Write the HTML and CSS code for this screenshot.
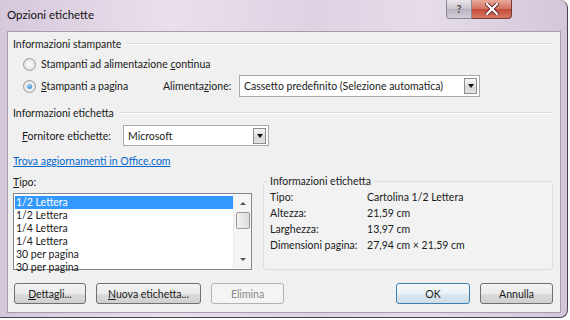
FILE: index.html
```html
<!DOCTYPE html>
<html lang="it">
<head>
  <meta charset="UTF-8">
  <title>Opzioni etichette</title>
  <link rel="stylesheet" href="styles.css">
</head>
<body>
  <div class="window">
    <div class="titlebar">
      <span class="title">Opzioni etichette</span>
      <div class="caption-buttons">
        <span class="cap-help">?</span>
        <span class="cap-close">
          <svg width="14" height="12" viewBox="0 0 14 12">
            <path d="M2 1 L12 11 M12 1 L2 11" stroke="#5a2020" stroke-width="4" stroke-linecap="square"/>
            <path d="M2 1 L12 11 M12 1 L2 11" stroke="#ffffff" stroke-width="2.2" stroke-linecap="square"/>
          </svg>
        </span>
      </div>
    </div>

    <div class="client">
      <div class="group-head"><span>Informazioni stampante</span></div>

      <div class="radio-row first">
        <span class="radio"></span>
        <span>Stampanti ad alimentazione <u>c</u>ontinua</span>
      </div>
      <div class="radio-row second">
        <span class="radio checked"></span>
        <span class="page-label"><u>S</u>tampanti a pagina</span>
        <span class="feed-label">Alimenta<u>z</u>ione:</span>
        <div class="combo feed-combo">
          <span class="combo-text">Cassetto predefinito (Selezione automatica)</span>
          <span class="combo-btn"></span>
        </div>
      </div>

      <div class="group-head second-head"><span>Informazioni etichetta</span></div>

      <div class="vendor-row">
        <span class="vendor-label"><u>F</u>ornitore etichette:</span>
        <div class="combo vendor-combo">
          <span class="combo-text">Microsoft</span>
          <span class="combo-btn"></span>
        </div>
      </div>

      <a class="link" href="#">Trova aggiornamenti in Office.com</a>

      <div class="lower">
        <div class="type-col">
          <div class="type-label"><u>T</u>ipo:</div>
          <div class="listbox">
            <ul class="items">
              <li class="selected">1/2 Lettera</li>
              <li>1/2 Lettera</li>
              <li>1/4 Lettera</li>
              <li>1/4 Lettera</li>
              <li>30 per pagina</li>
              <li>30 per pagina</li>
            </ul>
            <div class="scrollbar">
              <span class="arrow up"></span>
              <span class="thumb"></span>
              <span class="arrow down"></span>
            </div>
          </div>
        </div>

        <fieldset class="info">
          <legend>Informazioni etichetta</legend>
          <div class="info-grid">
            <span>Tipo:</span><span>Cartolina 1/2 Lettera</span>
            <span>Altezza:</span><span>21,59 cm</span>
            <span>Larghezza:</span><span>13,97 cm</span>
            <span>Dimensioni pagina:</span><span>27,94 cm × 21,59 cm</span>
          </div>
        </fieldset>
      </div>

      <div class="buttons">
        <button class="btn btn-details"><u>D</u>ettagli...</button>
        <button class="btn btn-new"><u>N</u>uova etichetta...</button>
        <button class="btn btn-delete" disabled>Elimina</button>
        <span class="spacer"></span>
        <button class="btn btn-ok">OK</button>
        <button class="btn btn-cancel">Annulla</button>
      </div>
    </div>
  </div>
</body>
</html>
```

FILE: styles.css
```css
html, body {
  margin: 0;
  padding: 0;
}
body {
  width: 570px;
  height: 320px;
  overflow: hidden;
  background: #ffffff;
  font-family: Lato, "Noto Sans", sans-serif;
  font-size: 10.5px;
  color: #1a1a1a;
  white-space: nowrap;
}
.window {
  width: 568px;
  height: 318px;
  box-sizing: border-box;
  padding: 0 6px 5px 7px;
  border: 1px solid #4a4250;
  border-top: none;
  border-left: none;
  border-radius: 0 8px 8px 0;
  background: linear-gradient(90deg, #d6c8dc 0%, #e9e0ec 30%, #ded2e3 55%, #e6dce9 75%, #d4c6da 100%);
}
.titlebar {
  height: 31px;
  display: flex;
  align-items: flex-start;
  position: relative;
}
.title {
  font-size: 11.5px;
  color: #111;
  margin-top: 8px;
}
.caption-buttons {
  position: absolute;
  top: 0;
  right: 49px;
  display: flex;
}
.cap-help {
  width: 26px;
  height: 19px;
  box-sizing: border-box;
  border: 1px solid #8e8796;
  border-top: none;
  border-radius: 0 0 0 4px;
  background: linear-gradient(#e9e6ec, #c9c3cd 50%, #b9b2be 51%, #d3ced6);
  color: #4a4a4a;
  font-size: 11px;
  font-weight: bold;
  text-align: center;
  line-height: 17px;
}
.cap-close {
  width: 40px;
  height: 19px;
  box-sizing: border-box;
  border: 1px solid #7a3a36;
  border-top: none;
  border-left: none;
  border-radius: 0 0 4px 0;
  background: linear-gradient(#e9a99c, #d4705f 50%, #c24a37 51%, #d77a64);
  display: flex;
  align-items: center;
  justify-content: center;
}
.client {
  height: 282px;
  box-sizing: border-box;
  border: 1px solid #a89cab;
  background: #f0f0f0;
  padding: 4px 7px 0 5px;
}
.group-head {
  display: flex;
  align-items: center;
  height: 15px;
}
.group-head::after {
  content: "";
  flex: 1;
  height: 1px;
  background: #dcdcdc;
  border-bottom: 1px solid #ffffff;
  margin-left: 5px;
}
.second-head {
  margin-top: 8px;
}
.radio-row {
  display: flex;
  align-items: center;
  padding-left: 10px;
}
.radio-row.first {
  margin-top: 5px;
  height: 16px;
}
.radio-row.second {
  margin-top: 3px;
  height: 22px;
}
.radio {
  width: 11px;
  height: 11px;
  border-radius: 50%;
  border: 1px solid #9a9a9a;
  background: radial-gradient(circle at 50% 50%, #ffffff 0%, #e8e8e8 60%, #cfcfcf 100%);
  margin-right: 5px;
  position: relative;
}
.radio.checked::after {
  content: "";
  position: absolute;
  left: 3px;
  top: 3px;
  width: 5px;
  height: 5px;
  border-radius: 50%;
  background: radial-gradient(circle at 40% 35%, #9cd8ff, #1f73c4);
}
.page-label {
  width: 122px;
}
.feed-label {
  width: 76px;
}
.combo {
  display: flex;
  align-items: center;
  box-sizing: border-box;
  height: 22px;
  border: 1px solid #a6a9ae;
  background: #ffffff;
  padding: 0 2px 0 4px;
}
.combo-text {
  flex: 1;
}
.combo-btn {
  width: 13px;
  height: 16px;
  box-sizing: border-box;
  border: 1px solid #8a8d92;
  background: linear-gradient(#f4f4f4, #e2e2e2 50%, #d6d6d6 51%, #e4e4e4);
  position: relative;
}
.combo-btn::after {
  content: "";
  position: absolute;
  left: 3px;
  top: 5px;
  border-left: 3px solid transparent;
  border-right: 3px solid transparent;
  border-top: 4px solid #111;
}
.feed-combo {
  width: 241px;
}
.vendor-row {
  display: flex;
  align-items: center;
  margin-top: 5px;
  height: 21px;
  padding-left: 9px;
}
.vendor-label {
  width: 101px;
}
.vendor-combo {
  width: 146px;
  height: 21px;
}
.link {
  display: block;
  margin-top: 8px;
  height: 15px;
  line-height: 15px;
  color: #0066cc;
  text-decoration: underline;
}
.lower {
  display: flex;
  margin-top: 6px;
}
.type-col {
  width: 240px;
}
.type-label {
  height: 14px;
  line-height: 14px;
}
.listbox {
  margin-top: 4px;
  height: 77px;
  box-sizing: border-box;
  border: 1px solid #828790;
  background: #ffffff;
  display: flex;
}
.items {
  list-style: none;
  margin: 0;
  padding: 2px 0 0 1px;
  flex: 1;
}
.items li {
  height: 13px;
  line-height: 13px;
  padding-left: 1px;
}
.items li.selected {
  background: #3399ff;
  color: #ffffff;
}
.scrollbar {
  width: 17px;
  display: flex;
  flex-direction: column;
  align-items: center;
  background: #f5f5f5;
  border-left: 1px solid #ececec;
}
.arrow {
  width: 0;
  height: 0;
  border-left: 3px solid transparent;
  border-right: 3px solid transparent;
}
.arrow.up {
  margin-top: 8px;
  border-bottom: 3px solid #555;
}
.arrow.down {
  margin-top: auto;
  margin-bottom: 8px;
  border-top: 3px solid #555;
}
.thumb {
  margin-top: 7px;
  width: 14px;
  height: 17px;
  box-sizing: border-box;
  border: 1px solid #9a9a9a;
  border-radius: 2px;
  background: linear-gradient(90deg, #f2f2f2, #dcdcdc);
}
.info {
  margin: 0 0 0 11px;
  padding: 0 8px 0 6px;
  width: 291px;
  height: 95px;
  box-sizing: border-box;
  border: 1px solid #d5dfe5;
  border-radius: 3px;
  background: #f2f2f2;
}
.info legend {
  padding: 0 2px;
  margin-left: -2px;
}
.info-grid {
  display: grid;
  grid-template-columns: 97px auto;
  grid-auto-rows: 16px;
  align-items: center;
  margin-top: 2px;
}
.buttons {
  display: flex;
  margin-top: 13px;
  padding-left: 1px;
  gap: 10px;
}
.spacer {
  flex: 1;
}
.btn {
  height: 21px;
  box-sizing: border-box;
  border: 1px solid #707070;
  border-radius: 3px;
  background: linear-gradient(#f2f2f2, #ebebeb 50%, #dddddd 51%, #cfcfcf);
  font-family: Lato, "Noto Sans", sans-serif;
  font-size: 10.5px;
  color: #1a1a1a;
  padding: 0;
}
.btn-details {
  width: 72px;
}
.btn-new {
  width: 105px;
}
.btn-delete {
  width: 73px;
  border-color: #adb2b5;
  background: #f4f4f4;
  color: #8a8a8a;
}
.btn-ok {
  width: 74px;
  border-color: #3c7fb1;
  background: linear-gradient(#f6f9fb, #eaf2f7 50%, #dbe7ef 51%, #cfdde8);
}
.btn-cancel {
  width: 73px;
}
```
